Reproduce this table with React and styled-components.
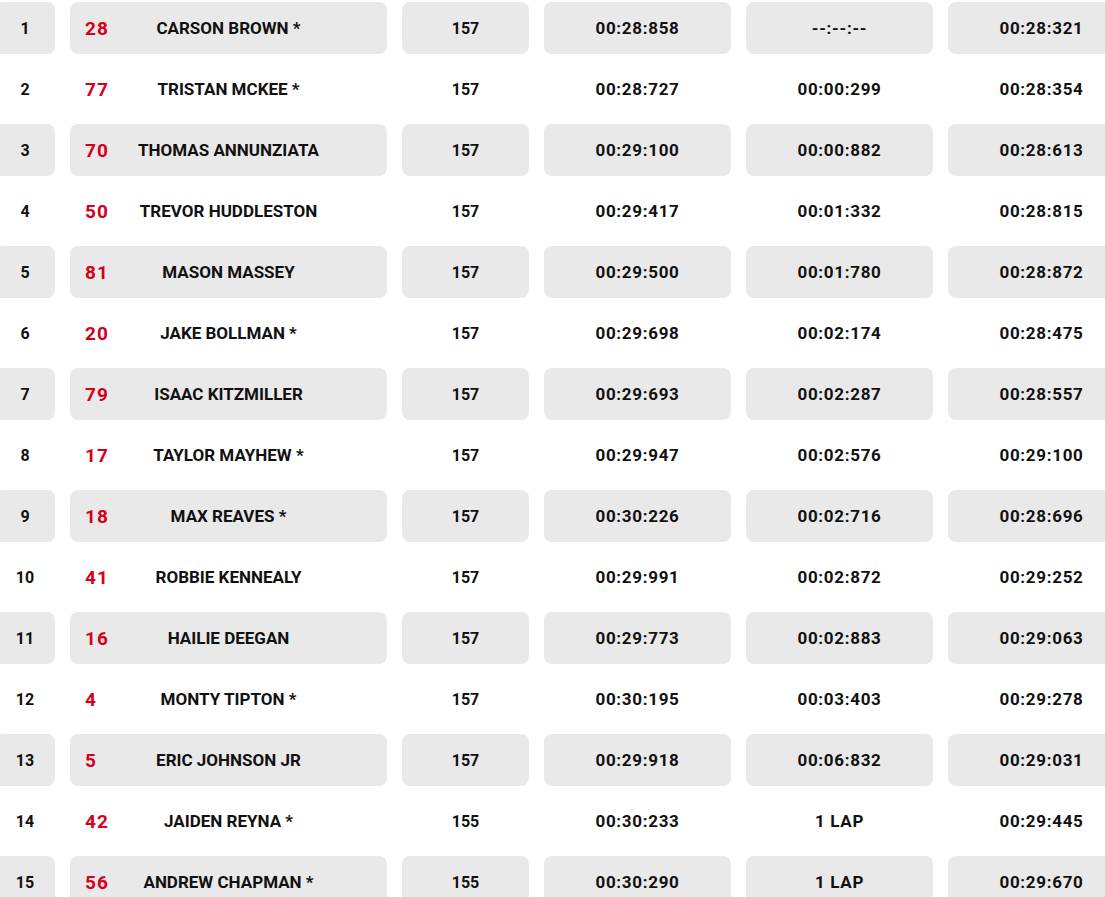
import React from 'react';
import styled, { createGlobalStyle } from 'styled-components';

const GlobalStyle = createGlobalStyle`
  html, body {
    margin: 0;
    padding: 0;
    background: #ffffff;
    overflow: hidden;
  }
  body {
    font-family: Roboto, 'Liberation Sans', sans-serif;
  }
`;

const results = [
  [1, 28, 'CARSON BROWN *', 157, '00:28:858', '--:--:--', '00:28:321'],
  [2, 77, 'TRISTAN MCKEE *', 157, '00:28:727', '00:00:299', '00:28:354'],
  [3, 70, 'THOMAS ANNUNZIATA', 157, '00:29:100', '00:00:882', '00:28:613'],
  [4, 50, 'TREVOR HUDDLESTON', 157, '00:29:417', '00:01:332', '00:28:815'],
  [5, 81, 'MASON MASSEY', 157, '00:29:500', '00:01:780', '00:28:872'],
  [6, 20, 'JAKE BOLLMAN *', 157, '00:29:698', '00:02:174', '00:28:475'],
  [7, 79, 'ISAAC KITZMILLER', 157, '00:29:693', '00:02:287', '00:28:557'],
  [8, 17, 'TAYLOR MAYHEW *', 157, '00:29:947', '00:02:576', '00:29:100'],
  [9, 18, 'MAX REAVES *', 157, '00:30:226', '00:02:716', '00:28:696'],
  [10, 41, 'ROBBIE KENNEALY', 157, '00:29:991', '00:02:872', '00:29:252'],
  [11, 16, 'HAILIE DEEGAN', 157, '00:29:773', '00:02:883', '00:29:063'],
  [12, 4, 'MONTY TIPTON *', 157, '00:30:195', '00:03:403', '00:29:278'],
  [13, 5, 'ERIC JOHNSON JR', 157, '00:29:918', '00:06:832', '00:29:031'],
  [14, 42, 'JAIDEN REYNA *', 155, '00:30:233', '1 LAP', '00:29:445'],
  [15, 56, 'ANDREW CHAPMAN *', 155, '00:30:290', '1 LAP', '00:29:670'],
];

const Table = styled.div`
  display: flex;
  flex-direction: column;
  gap: 9px;
  margin: 2px 0 0 -5px;
  width: 1140px;
`;

const Row = styled.div`
  display: grid;
  grid-template-columns: 60px 317px 127px 187px 187px 187px;
  column-gap: 15px;
  height: 52px;
`;

const Cell = styled.div`
  display: flex;
  align-items: center;
  justify-content: center;
  border-radius: 8px;
  background: ${p => (p.$shaded ? '#e9e9e9' : 'transparent')};
  color: #111111;
  font-size: ${p => (p.$time ? '17px' : '16px')};
  font-weight: 700;
  letter-spacing: ${p => (p.$time ? '0.7px' : '0')};
`;

const RiderCell = styled(Cell)`
  display: grid;
  grid-template-columns: 60px 1fr 60px;
  align-items: center;
  justify-content: stretch;
`;

const Number = styled.span`
  color: #d6001c;
  font-size: 19px;
  font-weight: 700;
  letter-spacing: 1px;
  padding-left: 15px;
`;

const Name = styled.span`
  font-size: 17px;
  text-align: center;
  white-space: nowrap;
`;

export default function App() {
  return (
    <>
      <GlobalStyle />
      <Table>
        {results.map(([pos, num, name, laps, best, gap, last]) => {
          const shaded = pos % 2 === 1;
          return (
            <Row key={pos}>
              <Cell $shaded={shaded}>{pos}</Cell>
              <RiderCell $shaded={shaded}>
                <Number>{num}</Number>
                <Name>{name}</Name>
                <span />
              </RiderCell>
              <Cell $shaded={shaded}>{laps}</Cell>
              <Cell $shaded={shaded} $time>{best}</Cell>
              <Cell $shaded={shaded} $time>{gap}</Cell>
              <Cell $shaded={shaded} $time>{last}</Cell>
            </Row>
          );
        })}
      </Table>
    </>
  );
}
